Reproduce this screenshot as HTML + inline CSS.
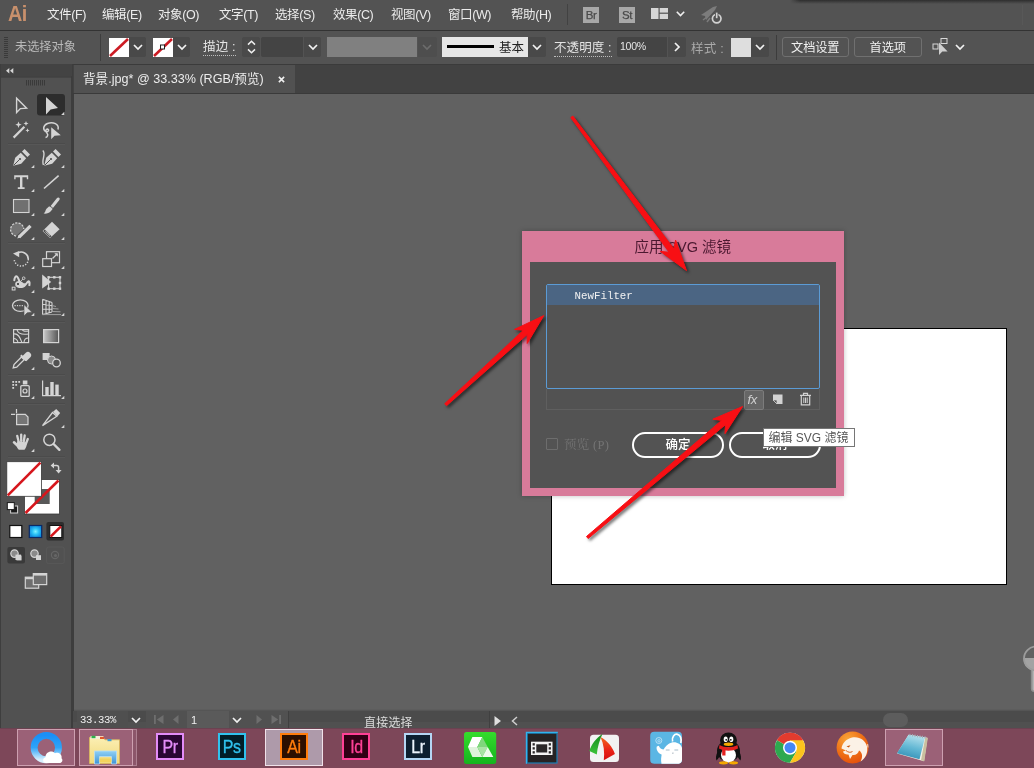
<!DOCTYPE html>
<html lang="zh-CN"><head><meta charset="utf-8"><title>Ai</title>
<style>
*{box-sizing:border-box;margin:0;padding:0}
html,body{width:1034px;height:768px;overflow:hidden;background:#616161}
body{position:relative;will-change:transform;font-family:"Liberation Sans","Noto Sans CJK SC",sans-serif;font-size:12px;color:#e6e6e6}
.abs,#menubar span,#ctrl>*,#toolbar>*,#status>*,#taskbar>*,#dlg>*{position:absolute}
svg{display:block;overflow:visible}
#menubar{left:0;top:0;width:1034px;height:30px;background:#535353}
#menubar span{top:7px;font-size:12.5px;line-height:17px;color:#ececec;white-space:nowrap;letter-spacing:-0.4px}
#menuline{left:0;top:29.5px;width:1034px;height:1.5px;background:#333}
#ctrl{left:0;top:31px;width:1034px;height:33px;background:#535353}
#ctrl .t{font-size:12.5px;line-height:16px;top:8px;color:#e4e4e4;white-space:nowrap}
#ctrl .dd{top:6px;height:20px;width:18px;background:#494949;border-radius:0 2px 2px 0}
#ctrl .dd svg{position:absolute;left:4px;top:7px}
#ctrl .inp{top:6px;height:20px;background:#444;border-radius:2px 0 0 2px}
#ctrl .btn{top:6px;height:20px;border:1px solid #707070;border-radius:3px;text-align:center;font-size:12.2px;line-height:21px;color:#f0f0f0;letter-spacing:-.1px}
#toolbar{left:0;top:64px;width:74px;height:664px;background:#515151;border-left:1px solid #3e3e3e;border-right:3px solid #3d3d3d}
#tabbar{left:73px;top:64px;width:961px;height:30px;background:#424242;border-bottom:1px solid #3a3a3a;border-top:1px solid #3b3b3b}
#tab{left:74px;top:65px;width:221px;height:28px;background:#515151;font-size:12.6px;line-height:29px;color:#ececec;padding-left:9px;white-space:nowrap}
#canvas{left:74px;top:94px;width:960px;height:617px;background:#616161}
#status{left:73px;top:711px;width:961px;height:17px;background:linear-gradient(#4b4b4b 0 62%,#505050 62%)}
#taskbar{left:0;top:727.5px;width:1034px;height:40.5px;background:#7d4759}
#artboard{left:551px;top:328px;width:456px;height:257px;background:#fff;border:1px solid #000}
</style></head><body>
<div id="canvas" class="abs"></div>
<div id="artboard" class="abs"></div>
<svg class="abs" style="left:1014px;top:640px" width="20" height="60" viewBox="1014 640 20 60"><path d="M1023.600 658A12.400 12.400 0 0 0 1031.500 670.500V688.500C1031.500 691 1033 691.800 1036 691.800V658Z" fill="#a3a3a3"/><path d="M1031.500 670.500V688.500C1031.500 691 1033 691.800 1036 691.800" fill="none" stroke="#8f8f8f" stroke-width="1.300"/><rect x="1033" y="671" width="3" height="19" fill="#b4b4b4"/><circle cx="1036" cy="658.500" r="12" fill="none" stroke="#9c9c9c" stroke-width="1.800"/></svg>
<div id="dlg" class="abs" style="left:522px;top:231px;width:321.5px;height:265px;background:#d87b9a;box-shadow:0 0 5px rgba(0,0,0,.25)">
<div style="left:0;top:6px;width:321.5px;text-align:center;font-size:14.5px;line-height:20px;color:#4b1830;white-space:nowrap">应用 SVG 滤镜</div>
<div style="left:8px;top:31px;width:306px;height:226px;background:#535353"></div>
<div style="left:24px;top:158px;width:274px;height:21px;border:1px solid #5f5f5f;border-top:none;background:#525252"></div>
<div style="left:24px;top:53px;width:274px;height:105px;border:1px solid #5b9bd5;border-radius:2px;background:#535353"></div>
<div style="left:25px;top:54px;width:272px;height:19.5px;background:#4b6583"></div>
<div style="left:52.5px;top:58px;font-family:'Liberation Mono','Noto Serif CJK SC',monospace;font-size:10.8px;line-height:14px;color:#f2f2f2;white-space:nowrap">NewFilter</div>
<div style="left:221.5px;top:158.5px;width:20.5px;height:20.5px;background:#666;border:1px solid #7c7c7c;border-radius:2px"></div>
<div style="left:225.5px;top:160.5px;font-family:'Liberation Sans',sans-serif;font-style:italic;font-size:13px;line-height:16px;color:#cfcfcf;letter-spacing:-.3px">fx</div>
<svg style="left:250px;top:162px" width="12" height="12" viewBox="0 0 12 12"><path d="M1 1.500H10.500V11H5L1 7Z" fill="#d2d2d2"/><path d="M1 7H5V11Z" fill="#525252" stroke="#d2d2d2" stroke-width=".8"/></svg>
<svg style="left:277px;top:161px" width="13" height="14" viewBox="0 0 13 14"><path d="M1 3.300H12M4.500 3V1.300H8.500V3" fill="none" stroke="#d2d2d2" stroke-width="1.200"/><path d="M2.300 3.500V12.800H10.700V3.500" fill="none" stroke="#d2d2d2" stroke-width="1.200"/><path d="M4.800 5.500V11M6.500 5.500V11M8.200 5.500V11" stroke="#d2d2d2" stroke-width="1"/></svg>
<div style="left:24px;top:207px;width:12px;height:12px;border:1px solid #6d6d6d;border-radius:1px"></div>
<div style="left:42px;top:206px;font-family:'Liberation Serif','Noto Serif CJK SC',serif;font-size:12.5px;line-height:16px;color:#747474;white-space:nowrap;letter-spacing:.3px">预览 (P)</div>
<div style="left:110px;top:201px;width:92px;height:26px;border:2px solid #fff;border-radius:13px;text-align:center;font-size:12.5px;font-weight:500;line-height:22px;color:#fff">确定</div>
<div style="left:207px;top:201px;width:92px;height:26px;border:2px solid #fff;border-radius:13px;text-align:center;font-size:12.5px;font-weight:500;line-height:22px;color:#fff">取消</div>
<div style="left:240.5px;top:196.500px;width:92.500px;height:19.500px;background:#fff;border:1px solid #767676;font-size:12px;line-height:18px;color:#575757;padding-left:5px;white-space:nowrap">编辑 SVG 滤镜</div>
</div>
<div id="menubar" class="abs">
<span style="left:8px;top:2px;font-size:22px;line-height:24px;font-weight:bold;color:#c8906c;letter-spacing:-.5px;transform:scaleX(.9);transform-origin:0 0">Ai</span>
<span style="left:47px">文件(F)</span>
<span style="left:102px">编辑(E)</span>
<span style="left:158px">对象(O)</span>
<span style="left:219px">文字(T)</span>
<span style="left:275px">选择(S)</span>
<span style="left:333px">效果(C)</span>
<span style="left:391px">视图(V)</span>
<span style="left:448px">窗口(W)</span>
<span style="left:511px">帮助(H)</span>
<div class="abs" style="left:567px;top:4px;width:1px;height:21px;background:#424242"></div>
<div class="abs" style="left:583px;top:7px;width:16px;height:16px;background:#a8a8a8;color:#4a4a4a;font-size:11.5px;font-weight:normal;-webkit-text-stroke:.25px #4a4a4a;line-height:17px;text-align:center;letter-spacing:-0.4px">Br</div>
<div class="abs" style="left:619px;top:7px;width:16px;height:16px;background:#a8a8a8;color:#4a4a4a;font-size:11.5px;font-weight:normal;-webkit-text-stroke:.25px #4a4a4a;line-height:17px;text-align:center;letter-spacing:-0.4px">St</div>
<svg class="abs" style="left:651px;top:8px" width="17" height="11"><rect x="0" y="0" width="7.5" height="11" fill="#d6d6d6"/><rect x="8.7" y="0" width="8.3" height="4.6" fill="#d6d6d6"/><rect x="8.7" y="5.8" width="8.3" height="5.2" fill="#d6d6d6"/></svg>
<svg class="abs" style="left:676px;top:11px" width="9" height="6" viewBox="0 0 9 6"><path d="M0.8 0.8L4.5 4.5L8.2 0.8" fill="none" stroke="#efefef" stroke-width="1.6"/></svg>
<svg class="abs" style="left:700px;top:4px" width="24" height="22" viewBox="0 0 24 22"><path d="M1 11L13 3L17 2L15 6L6 16L5 12Z" fill="#7c7c7c"/><path d="M3 16l4-3M7 18l3-4" stroke="#7c7c7c" stroke-width="1.5"/><circle cx="16.7" cy="14.6" r="4.3" fill="none" stroke="#d2d2d2" stroke-width="1.7"/><rect x="15" y="8" width="3.4" height="6" fill="#535353"/><path d="M16.7 8.6V14.2" stroke="#d2d2d2" stroke-width="1.7"/></svg>

</div>
<div class="abs topshadow" style="left:800px;top:0;width:234px;height:4px;background:linear-gradient(#2e2e2e,#535353)"></div><div class="abs" style="left:790px;top:0;width:10px;height:4px;background:linear-gradient(90deg,#535353,transparent),linear-gradient(#2e2e2e,#535353)"></div><div class="abs" style="left:1022px;top:5px;width:1px;height:20px;background:#585858"></div>
<div id="menuline" class="abs"></div>
<div id="ctrl" class="abs">
<div style="left:4px;top:6px;width:4px;height:21px;background:repeating-linear-gradient(#3a3a3a 0 1px,transparent 1px 2px)"></div>
<span class="t" style="left:15px;color:#b9b9b9;font-size:12.2px">未选择对象</span>
<div style="left:100px;top:3px;width:1px;height:27px;background:#3e3e3e"></div>
<div style="left:109px;top:6.5px"><svg width="20" height="19" viewBox="0 0 20 19"><rect width="20" height="19" fill="#fff"/><path d="M1 18L19 1" stroke="#cc1c24" stroke-width="2.6"/></svg></div>
<div class="dd" style="left:129px;width:17px"><svg width="10" height="6" viewBox="0 0 10 6"><path d="M1 1L5 5L9 1" fill="none" stroke="#f2f2f2" stroke-width="1.7"/></svg></div>
<div style="left:153px;top:6.5px"><svg width="20" height="19" viewBox="0 0 20 19"><rect width="20" height="19" fill="#fff"/><path d="M1 18L19 1" stroke="#cc1c24" stroke-width="2.6"/><rect x="7.5" y="7" width="4" height="4" fill="#fff" stroke="#222" stroke-width="1"/></svg></div>
<div class="dd" style="left:173px;width:17px"><svg width="10" height="6" viewBox="0 0 10 6"><path d="M1 1L5 5L9 1" fill="none" stroke="#f2f2f2" stroke-width="1.7"/></svg></div>
<span class="t" style="left:203px;border-bottom:1px dotted #bdbdbd;line-height:15px;top:9px;letter-spacing:.2px">描边 :</span>
<div class="inp" style="left:242px;width:18px;border-radius:2px;background:#4a4a4a"><svg style="position:absolute;left:5px;top:3px" width="9" height="14" viewBox="0 0 9 14"><path d="M1 4.6L4.5 1.2L8 4.6M1 9.4L4.5 12.8L8 9.4" fill="none" stroke="#efefef" stroke-width="1.5"/></svg></div>
<div class="inp" style="left:261px;width:42px"></div>
<div class="dd" style="left:304px;width:17px"><svg width="10" height="6" viewBox="0 0 10 6"><path d="M1 1L5 5L9 1" fill="none" stroke="#f2f2f2" stroke-width="1.7"/></svg></div>
<div style="left:327px;top:6px;width:90px;height:20px;background:#808080"></div>
<div class="dd" style="left:418px;width:19px;background:#4e4e4e"><svg width="10" height="6" viewBox="0 0 10 6"><path d="M1 1L5 5L9 1" fill="none" stroke="#6c6c6c" stroke-width="1.7"/></svg></div>
<div style="left:442px;top:6px;width:86px;height:20px;background:#e6e6e6"></div>
<div style="left:447px;top:14px;width:47px;height:3px;background:#000"></div>
<span class="t" style="left:499px;top:9px;color:#222;letter-spacing:0">基本</span>
<div class="dd" style="left:528px"><svg width="10" height="6" viewBox="0 0 10 6"><path d="M1 1L5 5L9 1" fill="none" stroke="#f2f2f2" stroke-width="1.7"/></svg></div>
<span class="t" style="left:554px;border-bottom:1px dotted #bdbdbd;line-height:15px;top:10px;letter-spacing:.1px">不透明度 :</span>
<div class="inp" style="left:617px;width:50px"></div>
<span class="t" style="left:620px;top:9px;font-size:10.6px;line-height:12px;letter-spacing:-.3px">100%</span>
<div class="dd" style="left:668px"><svg style="position:absolute;left:6px;top:5px" width="6" height="10" viewBox="0 0 6 10"><path d="M1 1L5 5L1 9" fill="none" stroke="#f2f2f2" stroke-width="1.7"/></svg></div>
<span class="t" style="left:691px;top:10px;color:#a9a9a9;letter-spacing:.3px">样式 :</span>
<div style="left:731px;top:6.5px;width:19.5px;height:19.5px;background:#dedede"></div>
<div class="dd" style="left:751px"><svg width="10" height="6" viewBox="0 0 10 6"><path d="M1 1L5 5L9 1" fill="none" stroke="#f2f2f2" stroke-width="1.7"/></svg></div>
<div style="left:776px;top:4px;width:1px;height:25px;background:#3c3c3c"></div>
<div class="btn" style="left:781.5px;width:67.5px">文档设置</div>
<div class="btn" style="left:854px;width:67.5px">首选项</div>
<svg style="left:932px;top:6px" width="20" height="20" viewBox="0 0 20 20"><rect x="1" y="7" width="5" height="5" fill="none" stroke="#d8d8d8" stroke-width="1"/><rect x="9" y="1.5" width="6" height="5" fill="none" stroke="#d8d8d8" stroke-width="1"/><path d="M7 5.5L7 18L10.3 14.6L15.6 14.4Z" fill="#cfcfcf"/></svg>
<svg style="left:955px;top:13px" width="10" height="6" viewBox="0 0 10 6"><path d="M1 1L5 5L9 1" fill="none" stroke="#f2f2f2" stroke-width="1.7"/></svg>
</div>
<div id="toolbar" class="abs"></div>
<svg class="abs" style="left:0;top:0" width="74" height="728" viewBox="0 0 74 728">
<g fill="#d4d4d4" stroke="none">
<!-- header -->
<rect x="1" y="64" width="71" height="12.5" fill="#434343"/>
<rect x="1" y="76.5" width="71" height="1" fill="#3b3b3b"/>
<path d="M9.3 68v5.4L6 70.7zM13.3 68v5.4L10 70.7z"/>
<g fill="#3a3a3a"><rect x="26" y="80" width="1" height="5.5"/><rect x="28" y="80" width="1" height="5.5"/><rect x="30" y="80" width="1" height="5.5"/><rect x="32" y="80" width="1" height="5.5"/><rect x="34" y="80" width="1" height="5.5"/><rect x="36" y="80" width="1" height="5.5"/><rect x="38" y="80" width="1" height="5.5"/><rect x="40" y="80" width="1" height="5.5"/><rect x="42" y="80" width="1" height="5.5"/><rect x="44" y="80" width="1" height="5.5"/></g>
<!-- separators -->
<g fill="#4b4b4b"><rect x="8" y="143" width="57" height="1"/><rect x="8" y="242" width="57" height="1"/><rect x="8" y="321" width="57" height="1"/><rect x="8" y="374" width="57" height="1"/><rect x="8" y="403" width="57" height="1"/><rect x="8" y="456" width="57" height="1"/></g>
<g fill="#575757"><rect x="8" y="144" width="57" height="1"/><rect x="8" y="243" width="57" height="1"/><rect x="8" y="322" width="57" height="1"/><rect x="8" y="375" width="57" height="1"/><rect x="8" y="404" width="57" height="1"/><rect x="8" y="457" width="57" height="1"/></g>
<!-- row1 -->
<path d="M16.6 98.2V112.6L20.4 108.6L26.6 108.2Z" fill="none" stroke="#d4d4d4" stroke-width="1.4"/>
<rect x="37" y="94" width="28" height="21.5" rx="3" fill="#2d2d2d"/>
<path d="M46 97V114.4L50.6 109.6L58 108Z"/>
<path d="M64.3 111.8V115H61.1Z"/>
<!-- row2: wand, lasso -->
<path d="M13.6 137.6L24.4 126.8" stroke="#d4d4d4" stroke-width="2.2"/>
<path d="M18.5 121.5l.9 2.3 2.3.9-2.3.9-.9 2.3-.9-2.3-2.3-.9 2.3-.9zM26 121l.7 1.8 1.8.7-1.8.7-.7 1.8-.7-1.8-1.8-.7 1.8-.7zM27.5 128.3l.6 1.5 1.5.6-1.5.6-.6 1.5-.6-1.5-1.5-.6 1.5-.6z"/>
<path d="M58 129.5C59.5 124 53 121.5 47.5 123.5C43 125.3 42.5 130 46 131.500C48.500 132.500 49.500 129.500 47.500 129C45.500 128.800 45.500 132 47 133.200C48.500 134.500 47.500 137 45.500 137.500" fill="none" stroke="#d4d4d4" stroke-width="1.5"/>
<path d="M51.2 127.300V139.200L54.500 135.800L60.800 135.300Z"/>
<!-- row3: pen, curvature -->
<g id="pennib"><path d="M13.2 165.800L15.200 157.800L20.800 152.800L26.200 158.200L21.200 163.800Z"/><path d="M22 151.600L24.600 149L30 154.400L27.400 157Z"/><path d="M13.800 165.200L19.500 159.500" stroke="#515151" stroke-width="1"/><circle cx="20" cy="159" r="1.100" fill="#515151"/></g>
<use href="#pennib" x="31" y="0"/>
<path d="M42.800 150.500C46.500 154 41 160 43.500 165" fill="none" stroke="#d4d4d4" stroke-width="1.400"/>
<path d="M34.300 164.800V168H31.100ZM64.300 164.800V168H61.100Z"/>
<!-- row4: T, line -->
<path d="M14.200 175.200H28.200V179.200H26.800V177.300H22.400V187.300H24.600V188.900H17.800V187.300H20V177.300H15.600V179.200H14.200Z"/>
<path d="M44 188.500L58.600 175.600" stroke="#d4d4d4" stroke-width="1.600"/>
<path d="M34.300 188.800V192H31.100ZM64.300 188.800V192H61.100Z"/>
<!-- row5: rect, brush -->
<rect x="13.500" y="199.500" width="15.500" height="13" fill="#707070" stroke="#d4d4d4" stroke-width="1.100"/>
<path d="M58.200 199L51.600 207.200" stroke="#d4d4d4" stroke-width="3" stroke-linecap="round"/>
<path d="M49.200 206.200L52.600 209L51 211C49 213.500 46 214 43.600 213.600C45.500 212.500 45.200 210.500 46.500 208.800Z"/>
<path d="M49.600 205.600L53.200 208.600" stroke="#515151" stroke-width="0.900"/>
<path d="M34.300 212.800V216H31.100ZM64.300 212.800V216H61.100Z"/>
<!-- row6: shaper, eraser -->
<path d="M16 236A6.600 6.600 0 1 1 23.800 229" fill="#747474" stroke="#d4d4d4" stroke-width="1.300" stroke-dasharray="2.200 1.200"/>
<path d="M19 237.200L30.500 225.800" stroke="#d4d4d4" stroke-width="3.200" stroke-linecap="butt"/>
<path d="M17.300 238.600l1.200-3 2 2z"/>
<path d="M52 221.800L59.600 229.200L50 238L42.600 231Z"/>
<path d="M44.800 229.600L51.600 236.200L50 237.600L43.200 231Z" fill="#515151"/>
<path d="M45.400 231.200L50 235.600" stroke="#d4d4d4" stroke-width="1"/>
<path d="M34.300 236.800V240H31.100ZM64.300 236.800V240H61.100Z"/>

<!-- row7: rotate, scale -->
<path d="M17.500 253.200A7 7 0 0 1 28.300 259" fill="none" stroke="#d4d4d4" stroke-width="1.700"/>
<path d="M28.300 259A7 7 0 1 1 14.200 259" fill="none" stroke="#d4d4d4" stroke-width="1.500" stroke-dasharray="1.300 1.500"/>
<path d="M13 253.600L19.200 251V257.200Z"/>
<rect x="46.500" y="251.700" width="13" height="11" fill="none" stroke="#d4d4d4" stroke-width="1.200"/>
<rect x="42.700" y="258.700" width="8.800" height="7.800" fill="#515151" stroke="#d4d4d4" stroke-width="1.200"/>
<path d="M52.500 258.500L57 254" stroke="#d4d4d4" stroke-width="1.200"/><path d="M54.300 253.300H57.800V256.800Z"/>
<path d="M34.300 265.800V269H31.100ZM64.300 265.800V269H61.100Z"/>
<!-- row8: puppet warp, free transform -->
<path d="M14.300 280.200C14.400 277.600 15.900 275.700 17 276.500C18.200 277.400 18.400 279 19.200 280.600" fill="none" stroke="#d4d4d4" stroke-width="2" stroke-linecap="round"/>
<path d="M15.300 283C16 281 19 280.400 21 281.400C23 282.400 24.200 284.200 25.800 282.800C27 281.400 28 279.800 29.400 280.500C31 281.400 30.700 284 30.200 286.200L28.300 285.700C28.700 284 28.600 282.800 27.800 283.200C26.600 284.600 25.500 287 23 287.800C20 288.600 16.300 287.600 15.300 285.500Z"/>
<path d="M18 284L23.600 278.300" stroke="#d4d4d4" stroke-width=".9"/>
<circle cx="18" cy="284" r="1.700" fill="#515151" stroke="#d4d4d4" stroke-width="1"/><circle cx="23.700" cy="278.200" r="1.300" fill="#515151" stroke="#d4d4d4" stroke-width=".9"/>
<rect x="12.200" y="287.200" width="2.800" height="2.800" fill="#515151" stroke="#d4d4d4" stroke-width="1"/>
<path d="M42.200 274.600V288.400L51.200 282Z"/>
<rect x="48.600" y="277.300" width="11.400" height="11.400" fill="none" stroke="#d4d4d4" stroke-width="1.100"/>
<g><rect x="47.400" y="276.100" width="2.400" height="2.400"/><rect x="53.100" y="276.100" width="2.400" height="2.400"/><rect x="58.800" y="276.100" width="2.400" height="2.400"/><rect x="58.800" y="281.800" width="2.400" height="2.400"/><rect x="47.400" y="287.500" width="2.400" height="2.400"/><rect x="53.100" y="287.500" width="2.400" height="2.400"/><rect x="58.800" y="287.500" width="2.400" height="2.400"/></g>
<path d="M34.300 289.800V293H31.100Z"/>
<!-- row9: shape builder, perspective grid -->
<ellipse cx="20.300" cy="305.600" rx="7.800" ry="5.800" fill="none" stroke="#d4d4d4" stroke-width="1.300"/>
<path d="M14.500 305.600H24" stroke="#d4d4d4" stroke-width="1.300" stroke-dasharray="1.200 1.200"/>
<path d="M24 304.600V316L27.200 312.800L32 312.200Z" stroke="#515151" stroke-width="0.600"/>
<path d="M42.600 299.300V314.600M42.600 299.300L52 302.600M42.600 304.300L52 305.800M42.600 309.300L52 309.300M46 300.500V313.500M49.200 301.600V312.600M52 302.600V312M42.600 314.600L52 312" fill="none" stroke="#d4d4d4" stroke-width="1.100"/>
<path d="M52 305.500L56 306.500M52 308.500L58.500 309M52 311.500L60.500 311.800M42.600 314.600H61" stroke="#a0a0a0" stroke-width="1"/>
<path d="M34.300 312.800V316H31.100ZM64.300 312.800V316H61.100Z"/>
<!-- row10: mesh, gradient -->
<rect x="13.600" y="329.600" width="15" height="13" fill="none" stroke="#d4d4d4" stroke-width="1.200"/>
<path d="M13.600 334C18 333 20 337 22 342.600M17 329.600C18 334 22 335 28.600 334M13.600 338.500C16 338.500 17.500 340 18 342.600M22.500 329.600C23 332 26 331.500 28.600 331M24 342.600C24 339 26 338 28.600 338" fill="none" stroke="#d4d4d4" stroke-width="1.100"/>
<defs><linearGradient id="gt" x1="0" x2="1" y1="0" y2="0"><stop offset="0" stop-color="#c8c8c8"/><stop offset="1" stop-color="#555"/></linearGradient></defs>
<rect x="43.600" y="329.600" width="15" height="13" fill="url(#gt)" stroke="#d4d4d4" stroke-width="1.200"/>
<!-- row11: eyedropper, blend -->
<path d="M13.200 368L14 364.500L21.500 357L24.200 359.700L16.700 367.200Z" fill="none" stroke="#d4d4d4" stroke-width="1.300"/>
<path d="M20.800 355.200L26 360.400M22.500 357.500L26.500 353.500A2.200 2.200 0 0 1 29.600 356.600L25.600 360.600" stroke="#d4d4d4" stroke-width="2" fill="#d4d4d4"/>
<rect x="42.600" y="353" width="7" height="7" fill="#d4d4d4"/>
<circle cx="51.500" cy="360" r="4" fill="#8a8a8a" stroke="#d4d4d4" stroke-width="1"/>
<circle cx="56.500" cy="363" r="3.800" fill="#515151" stroke="#d4d4d4" stroke-width="1.300"/>
<path d="M34.300 366.800V370H31.100Z"/>
<!-- row12: symbol sprayer, graph -->
<g><rect x="12.300" y="381" width="1.800" height="1.800"/><rect x="15.300" y="381" width="1.800" height="1.800"/><rect x="18.300" y="381" width="1.800" height="1.800"/><rect x="12.300" y="384" width="1.800" height="1.800"/><rect x="15.300" y="384" width="1.800" height="1.800"/><rect x="12.300" y="387" width="1.800" height="1.800"/></g>
<rect x="20.800" y="385.600" width="8.400" height="10.800" rx="1" fill="none" stroke="#d4d4d4" stroke-width="1.300"/>
<rect x="22.800" y="380.500" width="4.600" height="4" /><circle cx="25" cy="391" r="2" fill="none" stroke="#d4d4d4" stroke-width="1.200"/>
<path d="M42.600 380.500V395.600H61" fill="none" stroke="#d4d4d4" stroke-width="1.200"/>
<rect x="45.300" y="387" width="3.400" height="8.600"/><rect x="50.300" y="382" width="3.400" height="13.600"/><rect x="55.300" y="384.600" width="3.400" height="11"/>
<path d="M34.300 395.800V399H31.100ZM64.300 395.800V399H61.100Z"/>
<!-- row13: artboard, slice -->
<path d="M16.500 409V413.200M11 414.300H15.200" stroke="#d4d4d4" stroke-width="1.200"/>
<path d="M16.600 414.300H25.300L28 417V424.600H16.600Z" fill="#757575" stroke="#d4d4d4" stroke-width="1.200"/>
<path d="M42.500 425.600L52.500 412.500L56.800 416.200Z" fill="none" stroke="#d4d4d4" stroke-width="1.300"/>
<path d="M53 411.800L56.200 409L60.200 413L57.500 416.200Z"/>
<path d="M64.300 424.800V428H61.100Z"/>
<!-- row14: hand, zoom -->
<path d="M18.600 441.500L17.200 435.800M21.200 441L21.200 434.600M23.800 441.300L24.700 435.500M26 443.500L27.800 439" stroke="#d4d4d4" stroke-width="2.300" stroke-linecap="round" fill="none"/>
<path d="M14 442.300L18.500 446.500" stroke="#d4d4d4" stroke-width="2.600" stroke-linecap="round" fill="none"/>
<path d="M17.500 441L27 442.500C27 445.500 26 448 24.500 449.800H18.800C17.500 448.500 16.500 446.500 16.500 444.500Z"/>
<circle cx="49.400" cy="439.800" r="5.600" fill="none" stroke="#d4d4d4" stroke-width="1.500"/>
<path d="M53.600 444L59.400 449.800" stroke="#d4d4d4" stroke-width="2.400" stroke-linecap="round"/>
<path d="M34.300 448.800V452H31.100Z"/>
<!-- fill/stroke -->
<rect x="24.500" y="479.500" width="35" height="34.500" fill="#fff" stroke="#3a3a3a" stroke-width="0.800"/>
<rect x="34.700" y="489" width="15" height="15" fill="#585858"/>
<path d="M25.500 513L58.500 480.500" stroke="#d6161c" stroke-width="2.600"/>
<rect x="6.800" y="461.700" width="34.600" height="34.600" fill="#fff" stroke="#3a3a3a" stroke-width="0.800"/>
<path d="M7.800 495.300L40.400 462.700" stroke="#d6161c" stroke-width="2.600"/>
<path d="M52 465.600H56.600A2 2 0 0 1 58.600 467.600V471" fill="none" stroke="#d4d4d4" stroke-width="1.500"/>
<path d="M54 462.600V468.600L50.600 465.600ZM55.600 470H61.600L58.600 473.600Z"/>
<rect x="10.600" y="506" width="7" height="7" fill="#1a1a1a" stroke="#d4d4d4" stroke-width="1"/>
<rect x="7.300" y="502.600" width="7" height="7" fill="#fff" stroke="#1a1a1a" stroke-width="1"/>
<!-- color buttons -->
<rect x="9.800" y="525.500" width="12" height="12" fill="#fff" stroke="#111" stroke-width="1.200"/>
<defs><radialGradient id="rg"><stop offset="0" stop-color="#7ff2ff"/><stop offset=".5" stop-color="#2cc4f6"/><stop offset="1" stop-color="#1290e0"/></radialGradient></defs>
<rect x="29.300" y="525.500" width="12.400" height="12" fill="url(#rg)" stroke="#0a2a66" stroke-width="1.200"/>
<rect x="46.400" y="522" width="17.600" height="18.600" rx="2" fill="#2d2d2d"/>
<rect x="49.800" y="525.500" width="12" height="12" fill="#fff" stroke="#111" stroke-width="1"/>
<path d="M50.600 536.600L61 526.300" stroke="#d6161c" stroke-width="2.600"/>
<!-- draw modes -->
<rect x="7.400" y="547" width="17.600" height="16.600" rx="2" fill="#3a3a3a"/>
<circle cx="14.500" cy="553.600" r="3.700" fill="#8a8a8a" stroke="#d4d4d4" stroke-width="1.200"/><rect x="15.500" y="554.600" width="5.600" height="5.400" fill="#d4d4d4"/>
<rect x="16.500" y="555.600" width="5" height="4.800" fill="#d4d4d4"/><circle cx="34.500" cy="553.600" r="3.700" fill="#8a8a8a" stroke="#d4d4d4" stroke-width="1.200"/><rect x="36" y="555.200" width="5" height="4.800" fill="#d4d4d4"/>
<rect x="46.600" y="547" width="17.600" height="16.600" rx="2" fill="none" stroke="#595959" stroke-width="1"/>
<circle cx="55" cy="555" r="3.600" fill="none" stroke="#666" stroke-width="1.200"/><circle cx="55.500" cy="555.500" r="1.600" fill="#666"/>
<!-- screen mode -->
<rect x="25.300" y="577.200" width="13.400" height="11" fill="#6e6e6e" stroke="#d4d4d4" stroke-width="1.200"/><rect x="25.300" y="577.200" width="13.400" height="2" />
<rect x="33.300" y="573.600" width="13.400" height="11" fill="#6e6e6e" stroke="#d4d4d4" stroke-width="1.200"/><rect x="33.300" y="573.600" width="13.400" height="2"/>
</g>
</svg>
<div id="tabbar" class="abs"></div>
<div id="tab" class="abs">背景.jpg* @ 33.33% (RGB/预览)<svg style="position:absolute;left:203.5px;top:10.5px" width="7" height="7" viewBox="0 0 8 8"><path d="M1 1L7 7M7 1L1 7" stroke="#f0f0f0" stroke-width="1.8"/></svg></div>
<div class="abs" style="left:74px;top:709px;width:960px;height:2px;background:linear-gradient(#616161,#515151)"></div>
<div id="status" class="abs">
<div style="left:4px;top:0;width:51px;height:17px;background:#4f4f4f"></div>
<span style="left:7px;top:2px;font-family:'Liberation Mono',monospace;font-size:10.6px;line-height:15px;color:#f0f0f0;letter-spacing:-.35px">33.33%</span>
<svg style="position:absolute;left:58px;top:6px" width="10" height="6" viewBox="0 0 10 6"><path d="M1 1L5 5L9 1" fill="none" stroke="#f2f2f2" stroke-width="1.7"/></svg>
<div style="left:73px;top:0;width:142px;height:17px;background:#515151"></div>
<svg style="left:81px;top:4px" width="10" height="9" viewBox="0 0 10 9"><rect x="0" y="0" width="1.800" height="9" fill="#6e6e6e"/><path d="M9.500 0V9L2.800 4.500Z" fill="#6e6e6e"/></svg>
<svg style="left:100px;top:4px" width="6" height="9" viewBox="0 0 6 9"><path d="M5.500 0V9L0 4.500Z" fill="#6e6e6e"/></svg>
<div style="left:114px;top:0;width:42px;height:17px;background:#5a5a5a"></div>
<span style="left:118px;top:2px;font-family:'Liberation Sans',sans-serif;font-size:11px;line-height:15px;color:#f0f0f0">1</span>
<svg style="position:absolute;left:159px;top:6px" width="10" height="6" viewBox="0 0 10 6"><path d="M1 1L5 5L9 1" fill="none" stroke="#f2f2f2" stroke-width="1.7"/></svg>
<svg style="left:183px;top:4px" width="6" height="9" viewBox="0 0 6 9"><path d="M0.500 0V9L6 4.500Z" fill="#6e6e6e"/></svg>
<svg style="left:198px;top:4px" width="10" height="9" viewBox="0 0 10 9"><rect x="8.200" y="0" width="1.800" height="9" fill="#6e6e6e"/><path d="M0.500 0V9L7.200 4.500Z" fill="#6e6e6e"/></svg>
<div style="left:215px;top:0;width:1px;height:17px;background:#404040"></div><div style="left:415.5px;top:0;width:1px;height:17px;background:#404040"></div>
<span style="left:291px;top:3.5px;font-size:12px;line-height:16px;color:#dcdcdc;white-space:nowrap;letter-spacing:.2px">直接选择</span>
<svg style="left:421px;top:4.5px" width="7" height="10" viewBox="0 0 7 10"><path d="M0.500 0V10L7 5Z" fill="#e0e0e0"/></svg>
<svg style="left:438px;top:4.5px" width="7" height="10" viewBox="0 0 7 10"><path d="M6 1L1.500 5L6 9" fill="none" stroke="#cfcfcf" stroke-width="1.500"/></svg>
<div style="left:810px;top:1.500px;width:25px;height:14px;border-radius:7px;background:#5d5d5d"></div>
</div>
<div id="taskbar" class="abs">
<div style="left:0;top:0;width:1034px;height:1px;background:#6b4251"></div>
<div style="left:17px;top:1px;width:58px;height:37.5px;background:#9b6177;border:1px solid #cda0b0"></div>
<div style="left:79px;top:1px;width:58px;height:37.5px;background:#8c566a;border:1px solid #ad7f90"></div>
<div style="left:79px;top:1px;width:54px;height:37.5px;background:#9b6177;border:1px solid #cda0b0"></div>
<div style="left:265px;top:1px;width:58px;height:37.5px;background:#ae9aaa;border:1px solid #f0e2ea"></div>
<div style="left:885px;top:1px;width:58px;height:37.5px;background:#9b6177;border:1px solid #cda0b0"></div>
<svg style="left:0;top:0" width="1034" height="40" viewBox="0 728 1034 40">
<defs>
<linearGradient id="qg" x1="0" y1="0" x2="0" y2="1"><stop offset="0" stop-color="#1a8ff6"/><stop offset=".5" stop-color="#2ea4f8"/><stop offset="1" stop-color="#d8effd"/></linearGradient>
<linearGradient id="fg" x1="0" y1="0" x2="0" y2="1"><stop offset="0" stop-color="#fbefb4"/><stop offset="1" stop-color="#f1d97a"/></linearGradient>
<linearGradient id="bg1" x1="0" y1="0" x2="0" y2="1"><stop offset="0" stop-color="#8fd0f5"/><stop offset="1" stop-color="#3f93d6"/></linearGradient>
<linearGradient id="gg" x1="0" y1="0" x2="0" y2="1"><stop offset="0" stop-color="#35dc2c"/><stop offset="1" stop-color="#14b41e"/></linearGradient>
<linearGradient id="np" x1=".6" y1="0" x2=".3" y2="1"><stop offset="0" stop-color="#b4e0ec"/><stop offset=".5" stop-color="#63b8d4"/><stop offset="1" stop-color="#2f8db4"/></linearGradient>
<radialGradient id="og" cx=".35" cy=".25" r=".8"><stop offset="0" stop-color="#f9a63a"/><stop offset=".6" stop-color="#ee6e14"/><stop offset="1" stop-color="#e4500c"/></radialGradient>
</defs>
<!-- QQ browser -->
<circle cx="46.300" cy="747.600" r="12.200" fill="none" stroke="url(#qg)" stroke-width="6.900"/>
<path d="M46 763C42.500 763 42 758.200 45.500 757.200C45.200 752.500 51.500 749.500 55 753.200C58.500 751.500 62.500 754.500 61.500 758.200C63.500 760 62 763 59.500 763Z" fill="#fff"/>
<!-- explorer -->
<path d="M89.500 737.500H103L105 739.800H119.500V763.500H89.500Z" fill="url(#fg)" stroke="#d9b95a" stroke-width=".8"/>
<rect x="90.500" y="736" width="13" height="3" fill="#f6f0d8"/><rect x="91.500" y="735.800" width="4" height="2.400" fill="#2db34a"/><rect x="100" y="736.800" width="4" height="2.200" fill="#e2572b"/><rect x="107.500" y="739" width="4" height="2.200" fill="#3c9bd6"/>
<path d="M94.500 751H116.500V764H111.500V756.500H99.500V764H94.500Z" fill="url(#bg1)" stroke="#b8def5" stroke-width=".8"/>
<rect x="99.500" y="758.500" width="12" height="3.500" fill="#f3d35c"/>
<!-- green icon -->
<rect x="464" y="732" width="32.200" height="32" rx="2.500" fill="url(#gg)"/>
<path d="M472.400 737H482.300L477.300 747H468Z" fill="#ffffff"/>
<path d="M468 747H477.300L482.300 756.900H472.400Z" fill="#dff3dc"/>
<path d="M482.300 737L487.700 747H477.300Z" fill="#7fd67c"/>
<path d="M477.300 747H487.700L482.300 756.900Z" fill="#a9e3a5"/>
<path d="M487.700 747L493.300 756.900H482.300Z" fill="#eefaec"/>
<!-- film -->
<rect x="527.200" y="733.200" width="29.800" height="29.800" fill="#262324" stroke="#1a7fb5" stroke-width="1.200"/>
<path d="M526.400 763.800V732.400H557.800" fill="none" stroke="#2fb4ee" stroke-width="1.200"/>
<rect x="531" y="741.700" width="21.500" height="13.300" fill="#f4f4f4"/>
<rect x="536.300" y="744.300" width="10.900" height="8.200" fill="#2a2728"/>
<g fill="#2a2728"><rect x="532.600" y="743.200" width="2.200" height="2.300"/><rect x="532.600" y="747.200" width="2.200" height="2.300"/><rect x="532.600" y="751.200" width="2.200" height="2.300"/><rect x="548.700" y="743.200" width="2.200" height="2.300"/><rect x="548.700" y="747.200" width="2.200" height="2.300"/><rect x="548.700" y="751.200" width="2.200" height="2.300"/></g>
<!-- faststone -->
<defs><linearGradient id="fr" x1="0" y1="0" x2="0" y2="1"><stop offset="0" stop-color="#f2661c"/><stop offset=".55" stop-color="#ea2418"/><stop offset="1" stop-color="#d60f10"/></linearGradient>
<linearGradient id="fgr" x1="0" y1="0" x2="0" y2="1"><stop offset="0" stop-color="#138a1c"/><stop offset="1" stop-color="#3cc43a"/></linearGradient></defs>
<rect x="590" y="734.700" width="29" height="27.300" rx="3.500" fill="#f2f2f2"/>
<path d="M602.500 733.800C596.500 738 591.500 744 589.300 751L596.800 754.600C597.500 747 599.500 740.500 602.500 733.800Z" fill="url(#fgr)"/>
<path d="M600.500 737C607.500 741 612.500 747 614.900 753.900L603.800 760.300C604.800 752 603.800 744 600.500 737Z" fill="url(#fr)"/>
<!-- rabbit -->
<rect x="650.200" y="731.800" width="31.800" height="32" rx="4" fill="#5bb6e4"/>
<path d="M672.600 741.500C671.500 737 674.500 733.600 677.500 734.300C680.500 735 681.800 739 680.800 743" fill="#5bb6e4" stroke="#fff" stroke-width="1.700"/>
<path d="M661.500 763.800C660 757 662.500 748 668.500 744C674 740.500 680.500 743 682 748V760C682 762 680 763.800 678 763.800Z" fill="#fff"/>
<path d="M656.800 746.500C655.800 749.500 658 753.500 662.500 755L664 749.500C661.500 749.500 659.500 748 658.800 745.800Z" fill="#fff"/>
<circle cx="658.800" cy="740.500" r="3" fill="none" stroke="#bfe3f6" stroke-width=".9"/><circle cx="659" cy="740.800" r="1.200" fill="none" stroke="#bfe3f6" stroke-width=".8"/>
<path d="M665.800 750H669.600M674.400 750H678.200" stroke="#9eb4c2" stroke-width=".9"/><path d="M672 752.800L672.900 753.900L673.800 752.800Z" fill="#8a9aa6"/>
<!-- QQ penguin -->
<ellipse cx="728.500" cy="751" rx="11.500" ry="10.500" fill="#111"/>
<ellipse cx="728.500" cy="740.500" rx="8.500" ry="8" fill="#111"/>
<ellipse cx="728.500" cy="755" rx="7.500" ry="7.500" fill="#fff"/>
<ellipse cx="725.700" cy="739.300" rx="2" ry="2.800" fill="#fff"/><ellipse cx="731.300" cy="739.300" rx="2" ry="2.800" fill="#fff"/>
<circle cx="726.200" cy="739.800" r=".9" fill="#111"/><circle cx="730.800" cy="739.800" r=".9" fill="#111"/>
<ellipse cx="728.500" cy="744.300" rx="4.800" ry="1.700" fill="#f5a800"/>
<path d="M717.500 752C716 755 715.500 758 716.500 760.500C718.500 759 720 756 720.500 753ZM739.500 752C741 755 741.500 758 740.500 760.500C738.500 759 737 756 736.500 753Z" fill="#111"/><path d="M719.500 745C725 748 732 748 737.500 745L738 748.500C732 751.500 725 751.500 719 748.500Z" fill="#e3201f"/>
<path d="M722 748.500L725.500 749.300V755.500H722.300Z" fill="#e3201f"/>
<ellipse cx="723.500" cy="762.800" rx="4.500" ry="1.600" fill="#f5a800"/><ellipse cx="733.500" cy="762.800" rx="4.500" ry="1.600" fill="#f5a800"/>
<!-- chrome -->
<circle cx="790" cy="747.700" r="15" fill="#fff"/>
<path d="M790 747.700L777 740.200A15 15 0 0 1 803 740.200Z" fill="#e33b2e"/>
<path d="M777 740.200A15 15 0 0 1 803 740.200H790Z" fill="#e33b2e"/>
<path d="M777 740.200A15 15 0 0 0 790 762.700L796.500 751.500L790 747.700Z" fill="#2da94f"/>
<path d="M803 740.200A15 15 0 0 1 790 762.700L796.500 751.500L790 747.700L790 740.200Z" fill="#fcc31e"/>
<circle cx="790" cy="747.700" r="7" fill="#fff"/><circle cx="790" cy="747.700" r="5.500" fill="#4587f4"/>
<!-- cheetah -->
<circle cx="852.600" cy="747.500" r="16" fill="url(#og)"/>
<circle cx="852.600" cy="747.500" r="15.300" fill="none" stroke="#f9d9bd" stroke-width="1.200" stroke-dasharray="52 100" stroke-dashoffset="-92" opacity=".85"/>
<path d="M841.500 748.500C842 743.500 846 739 852 737.500C859 736 865.500 740 867 746.500C868.300 752.500 865.500 758.500 860.500 761.500C863 757 862.500 752.500 859 750.500C858.500 753.500 855.500 755.500 852.500 755L850 759L848.500 754.500C846 755 843.500 753.500 843 751.500L846 750.500Z" fill="#fbf1e6"/>
<path d="M846.500 746.200L850.500 745.200L848.800 747.500Z" fill="#c9560f"/>
<path d="M846 750.500C848 752.500 850.500 752.800 852.500 751.500" fill="none" stroke="#d2540c" stroke-width=".9"/>
<!-- notepad -->
<path d="M908.600 734.700L927.500 737.800L924 761.200L897 753.600Z" fill="#f3f1e6"/>
<path d="M925.300 737.500L927.800 738.200L924.300 761.300L921 760.300Z" fill="#c9bf9f"/>
<path d="M908.600 734.700L925 737.400L919.500 759.300L897 753.300Z" fill="url(#np)"/>
<path d="M910 733.800V736.200M912.500 734.200V736.600M915 734.600V737M917.500 735V737.400M920 735.400V737.800M922.500 735.800V738.200M925 736.200V738.600" stroke="#9fb3bd" stroke-width="1"/>
</svg>
<div style="left:156px;top:5px;width:28px;height:27px;background:#2a0634;border:2px solid #e38cf8;color:#e38cf8;font-size:19px;line-height:23px;-webkit-text-stroke:.35px currentColor;text-align:center;font-family:'Liberation Sans',sans-serif;letter-spacing:-.5px;text-indent:0px"><span style="display:inline-block;transform:scaleX(.84)">Pr</span></div>
<div style="left:218px;top:5px;width:28px;height:27px;background:#001e28;border:2px solid #30c2ee;color:#30c2ee;font-size:19px;line-height:23px;-webkit-text-stroke:.35px currentColor;text-align:center;font-family:'Liberation Sans',sans-serif;letter-spacing:-.5px;text-indent:0px"><span style="display:inline-block;transform:scaleX(.84)">Ps</span></div>
<div style="left:280px;top:5px;width:28px;height:27px;background:#2c0f00;border:2px solid #ff7d0c;color:#ff7d0c;font-size:19px;line-height:23px;-webkit-text-stroke:.35px currentColor;text-align:center;font-family:'Liberation Sans',sans-serif;letter-spacing:-.5px;text-indent:0px"><span style="display:inline-block;transform:scaleX(.84)">Ai</span></div>
<div style="left:342px;top:5px;width:28px;height:27px;background:#310015;border:2px solid #ff4095;color:#ff4095;font-size:19px;line-height:23px;-webkit-text-stroke:.35px currentColor;text-align:center;font-family:'Liberation Sans',sans-serif;letter-spacing:-.5px;text-indent:0px"><span style="display:inline-block;transform:scaleX(.84)">Id</span></div>
<div style="left:404px;top:5px;width:28px;height:27px;background:#0c1f30;border:2px solid #b4d6f4;color:#eaf3fb;font-size:19px;line-height:23px;-webkit-text-stroke:.35px currentColor;text-align:center;font-family:'Liberation Sans',sans-serif;letter-spacing:-.5px;text-indent:0px"><span style="display:inline-block;transform:scaleX(.84)">Lr</span></div>
</div>
<svg class="abs" style="left:0;top:0;filter:drop-shadow(2.5px 2.5px 1.5px rgba(0,0,0,.55))" width="1034" height="728" viewBox="0 0 1034 728"><g fill="#f80f14" stroke="#f80f14" stroke-width="1" stroke-linejoin="round"><path d="M570.8 117.6L669.2 252.3L660.4 251.4L686.5 270.6L675.6 240.1L673.9 248.8L572.8 116.0Z"/><path d="M446.5 405.7L527.2 334.5L527.2 343.5L543.8 315.6L514.5 329.4L523.3 330.3L444.7 403.7Z"/><path d="M588.1 538.5L725.4 424.8L725.0 433.7L742.6 406.5L712.8 419.2L721.6 420.4L586.5 536.5Z"/></g></svg>
</body></html>
